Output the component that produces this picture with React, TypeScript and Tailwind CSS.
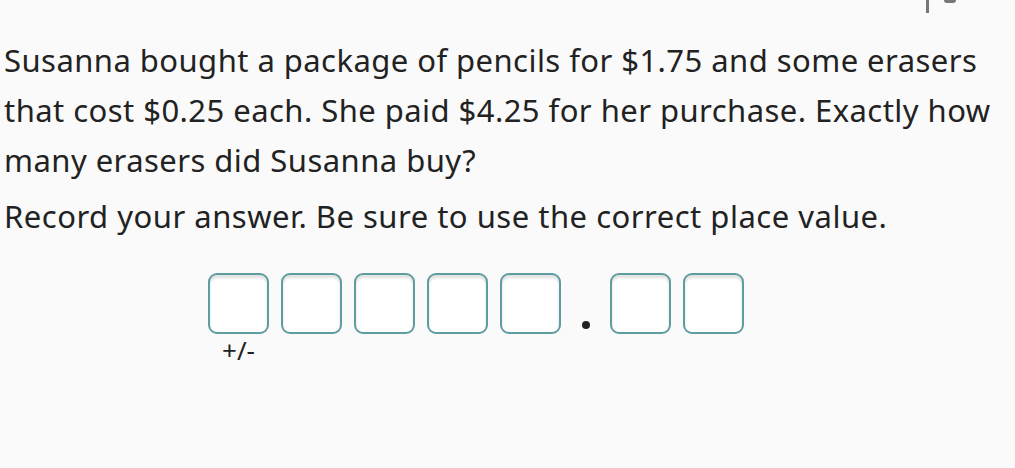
export default function App() {
  const boxes = [0, 1, 2, 3, 4];
  const decimals = [0, 1];

  return (
    <div className="h-[468px] w-[1015px] overflow-hidden bg-[#fafafa] font-['Noto_Sans',sans-serif] text-[#222222]">
      {/* cut-off toolbar marks at the top right */}
      <div className="relative h-0">
        <div className="absolute left-[926px] top-0 h-[13px] w-[3px] bg-[#777777]" />
        <div className="absolute left-[944px] top-0 h-[3px] w-[12px] rounded-b-sm bg-[#777777]" />
      </div>

      <div className="pl-[4px] pr-[10px] pt-[35px]">
        <p className="text-[31px] leading-[50px] tracking-[0.45px]">
          Susanna bought a package of pencils for $1.75 and some erasers that cost $0.25 each. She paid $4.25 for her
          purchase. Exactly how many erasers did Susanna buy?
        </p>
        <p className="mt-[6px] text-[31px] leading-[50px] tracking-[0.5px]">
          Record your answer. Be sure to use the correct place value.
        </p>

        <div className="ml-[204px] mt-[32px] flex items-start">
          <div className="flex gap-[12px]">
            {boxes.map((b) => (
              <div key={b} className="flex flex-col items-center">
                <div className="h-[61px] w-[61px] rounded-[9px] border-2 border-[#5f9ca1] bg-white shadow-[inset_0_3px_3px_rgba(0,0,0,0.12)]" />
                {b === 0 && <span className="mt-[2px] text-[26px] leading-[28px] text-[#222222]">+/-</span>}
              </div>
            ))}
          </div>
          <div className="flex h-[61px] w-[49px] items-end justify-center pb-[5px]">
            <div className="h-[8px] w-[8px] rounded-full bg-[#222222]" />
          </div>
          <div className="flex gap-[12px]">
            {decimals.map((d) => (
              <div
                key={d}
                className="h-[61px] w-[61px] rounded-[9px] border-2 border-[#5f9ca1] bg-white shadow-[inset_0_3px_3px_rgba(0,0,0,0.12)]"
              />
            ))}
          </div>
        </div>
      </div>
    </div>
  );
}
